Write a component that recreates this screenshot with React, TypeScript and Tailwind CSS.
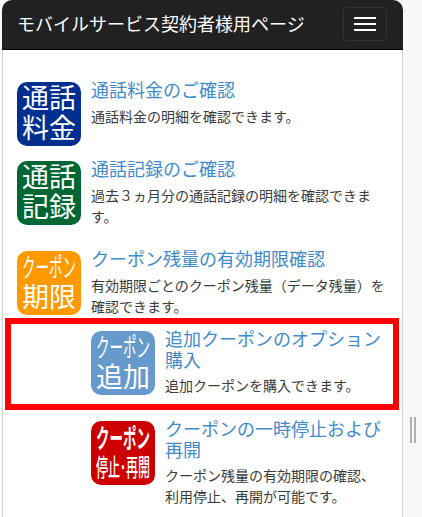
const Icon = ({ bg, top, bottom, coupon, heavy }: { bg: string; top: string; bottom: string; coupon?: boolean; heavy?: boolean }) => (
  <div className={`${bg} flex h-16 w-16 shrink-0 flex-col items-center justify-center rounded-[10px] text-white`}>
    {coupon ? (
      <span className={`scale-x-[0.52] whitespace-nowrap text-[26px] leading-[30px] ${heavy ? "font-bold" : "font-normal"}`}>{top}</span>
    ) : (
      <span className="text-[27px] leading-[30px] font-normal">{top}</span>
    )}
    {heavy ? (
      <span className="scale-x-[0.5] whitespace-nowrap text-[24px] leading-[28px] font-medium">{bottom}</span>
    ) : (
      <span className="text-[27px] leading-[30px] font-normal">{bottom}</span>
    )}
  </div>
);

const Item = ({ icon, title, desc, className }: { icon: React.ReactNode; title: string; desc: string; className?: string }) => (
  <div className={`flex items-start gap-[10px] ${className ?? ""}`}>
    {icon}
    <div className="-mt-[1px] min-w-0 flex-1">
      <h5 className="text-[18px] leading-[20.5px] text-[#428bca]">{title}</h5>
      <p className="mt-[5px] text-[14px] leading-[21px] text-[#3b3b3b]">{desc}</p>
    </div>
  </div>
);

export default function App() {
  return (
    <div className="relative h-[517px] w-[422px] overflow-hidden bg-[#f8f9fa] font-['Roboto','Noto_Sans_CJK_JP',sans-serif]">
      <div className="ml-[2px] h-full w-[401px] rounded-t-[10px] border-x border-[#ced4da] bg-white">
        <header className="-mx-px flex h-[50px] items-center justify-between rounded-t-[10px] border-b border-black bg-[#212121] pr-[16px] pb-[1px] pl-[15px]">
          <span className="text-[18px] text-white">モバイルサービス契約者様用ページ</span>
          <button className="flex h-[34px] w-[44px] flex-col items-center justify-center gap-[4px] rounded-[4px] border border-[#333333]">
            <span className="h-[2px] w-[22px] bg-white" />
            <span className="h-[2px] w-[22px] bg-white" />
            <span className="h-[2px] w-[22px] bg-white" />
          </button>
        </header>

        <div className="h-[268px] pt-[32px] pr-[14px] pl-[14px]">
          <Item icon={<Icon bg="bg-[#002f8f]" top="通話" bottom="料金" />} title="通話料金のご確認" desc="通話料金の明細を確認できます。" />
          <Item className="mt-[15px]" icon={<Icon bg="bg-[#006633]" top="通話" bottom="記録" />} title="通話記録のご確認" desc="過去３ヵ月分の通話記録の明細を確認できます。" />
          <Item className="mt-[23.5px]" icon={<Icon bg="bg-[#ff9900]" coupon top="クーポン" bottom="期限" />} title="クーポン残量の有効期限確認" desc="有効期限ごとのクーポン残量（データ残量）を確認できます。" />
        </div>

        <div className="mr-[3px] ml-[2px] h-[92px] border-[6px] border-[#ff0000] pt-[7px] pr-[8px] pl-[80px]">
          <Item icon={<Icon bg="bg-[#6699cc]" coupon top="クーポン" bottom="追加" />} title="追加クーポンのオプション購入" desc="追加クーポンを購入できます。" />
        </div>

        <div className="mt-[11px] pr-[14px] pl-[88px]">
          <Item icon={<Icon bg="bg-[#cc0000]" coupon heavy top="クーポン" bottom="停止･再開" />} title="クーポンの一時停止および再開" desc="クーポン残量の有効期限の確認、利用停止、再開が可能です。" />
        </div>
      </div>
      <div className="absolute top-[417px] left-[410px] flex h-[26px] gap-[2px]">
        <span className="w-[2px] bg-[#b0b0b0]" />
        <span className="w-[2px] bg-[#b0b0b0]" />
      </div>
    </div>
  );
}
